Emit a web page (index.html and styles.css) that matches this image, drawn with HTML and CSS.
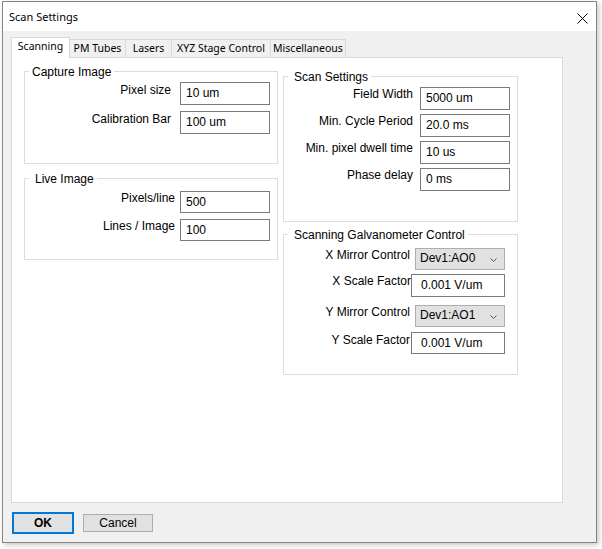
FILE: index.html
```html
<!DOCTYPE html>
<html>
<head>
<meta charset="utf-8">
<title>Scan Settings</title>
<link rel="stylesheet" href="styles.css">
</head>
<body>
<div class="window">
  <div class="titlebar">
    <span class="title">Scan Settings</span>
    <svg class="close" width="11" height="11" viewBox="0 0 11 11"><path d="M0.5 0.5 L10.5 10.5 M10.5 0.5 L0.5 10.5" stroke="#000" stroke-width="1" fill="none"/></svg>
  </div>
  <div class="client">
    <div class="tabs">
      <div class="tab active tab-scan">Scanning</div>
      <div class="tab tab-pm">PM Tubes</div>
      <div class="tab tab-las">Lasers</div>
      <div class="tab tab-xyz">XYZ Stage Control</div>
      <div class="tab tab-misc">Miscellaneous</div>
    </div>
    <div class="panel">
      <div class="col col-left">
        <div class="group capture">
          <span class="group-title">Capture Image</span>
          <div class="row"><span class="lbl">Pixel size</span><input class="field" value="10 um"></div>
          <div class="row"><span class="lbl">Calibration Bar</span><input class="field" value="100 um"></div>
        </div>
        <div class="group live">
          <span class="group-title">Live Image</span>
          <div class="row"><span class="lbl">Pixels/line</span><input class="field" value="500"></div>
          <div class="row"><span class="lbl">Lines / Image</span><input class="field" value="100"></div>
        </div>
      </div>
      <div class="col col-right">
        <div class="group scan">
          <span class="group-title">Scan Settings</span>
          <div class="row"><span class="lbl">Field Width</span><input class="field" value="5000 um"></div>
          <div class="row"><span class="lbl">Min. Cycle Period</span><input class="field" value="20.0 ms"></div>
          <div class="row"><span class="lbl">Min. pixel dwell time</span><input class="field" value="10 us"></div>
          <div class="row"><span class="lbl">Phase delay</span><input class="field" value="0 ms"></div>
        </div>
        <div class="group galvo">
          <span class="group-title">Scanning Galvanometer Control</span>
          <div class="row r1"><span class="lbl">X Mirror Control</span><div class="combo"><span>Dev1:AO0</span><svg width="7" height="4" viewBox="0 0 7 4"><polyline points="0.5,0.5 3.5,3.5 6.5,0.5" stroke="#555" stroke-width="1" fill="none"/></svg></div></div>
          <div class="row r2"><span class="lbl lbl-x">X Scale Factor</span><input class="field scale" value="0.001 V/um"></div>
          <div class="row r3"><span class="lbl">Y Mirror Control</span><div class="combo"><span>Dev1:AO1</span><svg width="7" height="4" viewBox="0 0 7 4"><polyline points="0.5,0.5 3.5,3.5 6.5,0.5" stroke="#555" stroke-width="1" fill="none"/></svg></div></div>
          <div class="row r4"><span class="lbl lbl-y">Y Scale Factor</span><input class="field scale" value="0.001 V/um"></div>
        </div>
      </div>
    </div>
    <div class="buttons">
      <button class="btn btn-ok">OK</button>
      <button class="btn btn-cancel">Cancel</button>
    </div>
  </div>
</div>
</body>
</html>
```

FILE: styles.css
```css
html, body {
  margin: 0;
  padding: 0;
  background: #ffffff;
}

body {
  width: 602px;
  height: 549px;
  overflow: hidden;
}

.window {
  margin: 1px 0 0 2px;
  width: 595px;
  height: 542px;
  box-sizing: border-box;
  border: 1px solid #858585;
  box-shadow: 2px 2px 5px rgba(0, 0, 0, 0.22);
  display: flex;
  flex-direction: column;
  background: #f0f0f0;
}

.titlebar {
  height: 29px;
  flex: none;
  background: #ffffff;
  display: flex;
  align-items: center;
  justify-content: space-between;
  padding: 0 8px 0 6px;
}

.title {
  font-family: "Noto Sans", "DejaVu Sans", sans-serif;
  font-size: 11px;
  line-height: 15px;
  color: #000;
}

.close {
  display: block;
  margin-top: 4px;
}

.client {
  flex: 1;
  padding: 6px 0 0 8px;
}

.tabs {
  display: flex;
  align-items: flex-end;
  height: 20px;
  position: relative;
  z-index: 1;
}

.tab {
  box-sizing: border-box;
  height: 18px;
  border: 1px solid #d9d9d9;
  border-bottom: none;
  margin-left: -1px;
  background: #f0f0f0;
  font-family: "Noto Sans", "DejaVu Sans", sans-serif;
  font-size: 10.5px;
  line-height: 16px;
  padding-top: 0;
  text-align: center;
  color: #000;
  white-space: nowrap;
}

.tab.active {
  height: 21px;
  background: #ffffff;
  margin-bottom: -1px;
  margin-left: 0;
}

.tab-scan { width: 59px; }
.tab-pm { width: 57px; }
.tab-las { width: 47px; }
.tab-xyz { width: 100px; }
.tab-misc { width: 76px; }

.panel {
  width: 552px;
  height: 446px;
  box-sizing: border-box;
  border: 1px solid #d9d9d9;
  background: #ffffff;
  display: flex;
  align-items: flex-start;
  gap: 5px;
  padding: 13px 0 0 12px;
}

.col {
  display: flex;
  flex-direction: column;
}

.col-left { width: 254px; }
.col-right { width: 235px; margin-top: 5px; }

.group {
  position: relative;
  box-sizing: border-box;
  border: 1px solid #dcdcdc;
  font-family: "Liberation Sans", Arial, sans-serif;
  font-size: 12px;
  color: #000;
}

.group-title {
  position: absolute;
  top: -7px;
  left: 4px;
  padding: 0 3px 0 6px;
  background: #ffffff;
  line-height: 14px;
  white-space: nowrap;
}

.capture .group-title { padding-left: 3px; }

.row {
  display: flex;
  justify-content: flex-end;
  align-items: flex-start;
}

.lbl {
  line-height: 14px;
  white-space: nowrap;
}

.field {
  box-sizing: border-box;
  width: 90px;
  height: 23px;
  margin: 0;
  border: 1px solid #7a7a7a;
  padding: 0 0 1px 5px;
  background: #ffffff;
  font-family: "Liberation Sans", Arial, sans-serif;
  font-size: 12px;
  color: #000;
  outline: none;
}

/* Capture Image */
.capture {
  height: 93px;
  padding: 10px 7px 0 0;
}
.capture .row + .row { margin-top: 6px; }
.capture .lbl { margin-right: 9px; margin-top: 1px; }

/* Live Image */
.live {
  height: 82px;
  margin-top: 14px;
  padding: 12px 7px 0 0;
}
.live .field { height: 22px; }
.live .row + .row { margin-top: 6px; }
.live .lbl { margin-right: 5px; }

/* Scan Settings */
.scan {
  height: 146px;
  padding: 10px 7px 0 0;
}
.scan .row + .row { margin-top: 4px; }
.scan .lbl { margin-right: 7px; }

/* Galvanometer */
.galvo {
  height: 141px;
  margin-top: 12px;
  padding: 13px 12px 0 0;
}
.galvo .lbl { margin-right: 5px; }
.galvo .lbl-x { margin-right: 0; }
.galvo .lbl-y { margin-right: 1px; margin-top: 1px; }
.galvo .r2 { margin-top: 4px; }
.galvo .r3 { margin-top: 8px; }
.galvo .r4 { margin-top: 5px; }
.galvo .r4 .field { height: 22px; }

.field.scale {
  width: 94px;
  padding-left: 9px;
}

.combo {
  box-sizing: border-box;
  width: 90px;
  height: 22px;
  border: 1px solid #adadad;
  background: #e1e1e1;
  display: flex;
  align-items: flex-start;
  justify-content: space-between;
  padding: 2px 7px 0 4px;
  line-height: 14px;
}

.combo svg {
  display: block;
  margin-top: 7px;
}

.buttons {
  display: flex;
  align-items: center;
  gap: 9px;
  margin-top: 9px;
  padding-left: 1px;
}

.btn {
  box-sizing: border-box;
  margin: 0;
  padding: 0;
  background: #e1e1e1;
  border: 1px solid #adadad;
  font-family: "Liberation Sans", Arial, sans-serif;
  font-size: 12px;
  line-height: 14px;
  color: #000;
}

.btn-ok {
  width: 62px;
  height: 22px;
  border: 2px solid #0078d7;
  font-weight: bold;
}

.btn-cancel {
  width: 70px;
  height: 18px;
}
```
